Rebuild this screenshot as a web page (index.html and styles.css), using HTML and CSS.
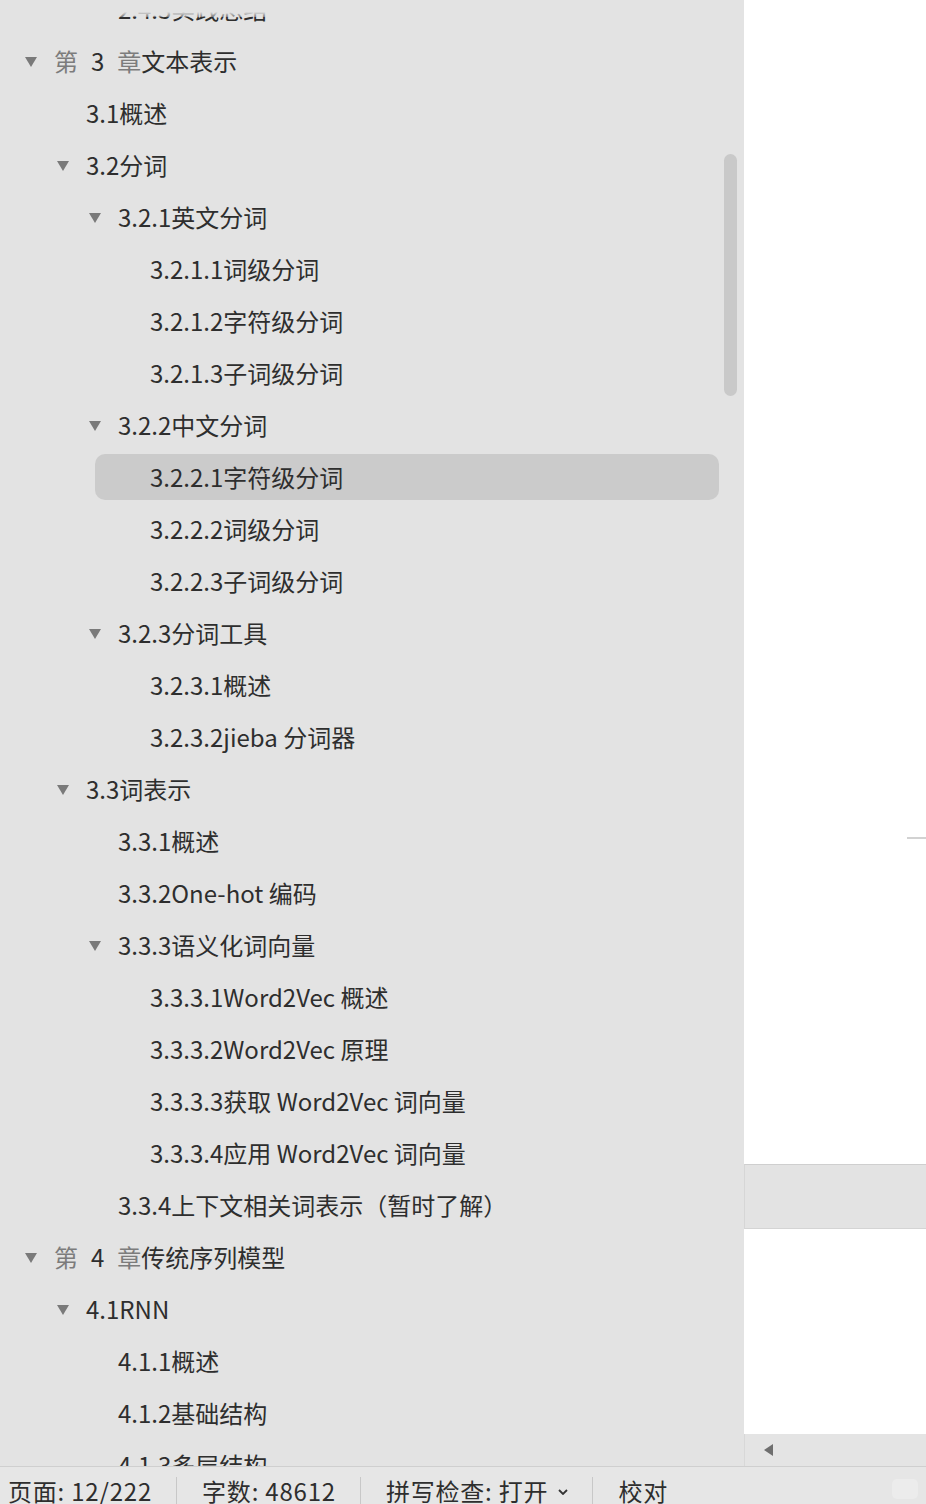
FILE: index.html
```html
<!DOCTYPE html>
<html lang="zh-CN">
<head>
<meta charset="utf-8">
<title>导航</title>
<link rel="stylesheet" href="styles.css">
</head>
<body>
<div class="app">
  <aside class="sidebar">
    <ul class="tree">
      <li class="row l2"><span class="item"><span class="tw"></span><span class="txt">2.4.3实践总结</span></span></li>
      <li class="row l0"><span class="item"><span class="tw"><i class="tri"></i></span><span class="txt"><span class="ch">第</span><span class="num">3</span><span class="ch">章</span>文本表示</span></span></li>
      <li class="row l1"><span class="item"><span class="tw"></span><span class="txt">3.1概述</span></span></li>
      <li class="row l1"><span class="item"><span class="tw"><i class="tri"></i></span><span class="txt">3.2分词</span></span></li>
      <li class="row l2"><span class="item"><span class="tw"><i class="tri"></i></span><span class="txt">3.2.1英文分词</span></span></li>
      <li class="row l3"><span class="item"><span class="tw"></span><span class="txt">3.2.1.1词级分词</span></span></li>
      <li class="row l3"><span class="item"><span class="tw"></span><span class="txt">3.2.1.2字符级分词</span></span></li>
      <li class="row l3"><span class="item"><span class="tw"></span><span class="txt">3.2.1.3子词级分词</span></span></li>
      <li class="row l2"><span class="item"><span class="tw"><i class="tri"></i></span><span class="txt">3.2.2中文分词</span></span></li>
      <li class="row l3 selected"><span class="item"><span class="tw"></span><span class="txt">3.2.2.1字符级分词</span></span></li>
      <li class="row l3"><span class="item"><span class="tw"></span><span class="txt">3.2.2.2词级分词</span></span></li>
      <li class="row l3"><span class="item"><span class="tw"></span><span class="txt">3.2.2.3子词级分词</span></span></li>
      <li class="row l2"><span class="item"><span class="tw"><i class="tri"></i></span><span class="txt">3.2.3分词工具</span></span></li>
      <li class="row l3"><span class="item"><span class="tw"></span><span class="txt">3.2.3.1概述</span></span></li>
      <li class="row l3"><span class="item"><span class="tw"></span><span class="txt">3.2.3.2jieba 分词器</span></span></li>
      <li class="row l1"><span class="item"><span class="tw"><i class="tri"></i></span><span class="txt">3.3词表示</span></span></li>
      <li class="row l2"><span class="item"><span class="tw"></span><span class="txt">3.3.1概述</span></span></li>
      <li class="row l2"><span class="item"><span class="tw"></span><span class="txt">3.3.2One-hot 编码</span></span></li>
      <li class="row l2"><span class="item"><span class="tw"><i class="tri"></i></span><span class="txt">3.3.3语义化词向量</span></span></li>
      <li class="row l3"><span class="item"><span class="tw"></span><span class="txt">3.3.3.1Word2Vec 概述</span></span></li>
      <li class="row l3"><span class="item"><span class="tw"></span><span class="txt">3.3.3.2Word2Vec 原理</span></span></li>
      <li class="row l3"><span class="item"><span class="tw"></span><span class="txt">3.3.3.3获取 Word2Vec 词向量</span></span></li>
      <li class="row l3"><span class="item"><span class="tw"></span><span class="txt">3.3.3.4应用 Word2Vec 词向量</span></span></li>
      <li class="row l2"><span class="item"><span class="tw"></span><span class="txt">3.3.4上下文相关词表示（暂时了解）</span></span></li>
      <li class="row l0"><span class="item"><span class="tw"><i class="tri"></i></span><span class="txt"><span class="ch">第</span><span class="num">4</span><span class="ch">章</span>传统序列模型</span></span></li>
      <li class="row l1"><span class="item"><span class="tw"><i class="tri"></i></span><span class="txt">4.1RNN</span></span></li>
      <li class="row l2"><span class="item"><span class="tw"></span><span class="txt">4.1.1概述</span></span></li>
      <li class="row l2"><span class="item"><span class="tw"></span><span class="txt">4.1.2基础结构</span></span></li>
      <li class="row l2"><span class="item"><span class="tw"></span><span class="txt">4.1.3多层结构</span></span></li>
    </ul>
    <div class="fade"></div>
    <div class="vscroll"></div>
  </aside>
  <main class="doc">
    <div class="gap-a"></div>
    <div class="mark"></div>
    <div class="gap-b"></div>
    <div class="band"></div>
    <div class="page"></div>
    <div class="hscroll"><i class="larrow"></i></div>
  </main>
  <footer class="status">
    <span class="st first">页面: 12/222</span>
    <span class="st">字数: 48612</span>
    <span class="st">拼写检查: 打开 <svg class="chev" viewBox="0 0 10 6" width="10" height="6"><path d="M1 1 L5 5 L9 1" fill="none" stroke="#333" stroke-width="1.8"/></svg></span>
    <span class="st last">校对</span>
    <span class="corner"></span>
  </footer>
</div>
</body>
</html>
```
FILE: styles.css
```css
* { box-sizing: border-box; }
html, body {
  margin: 0;
  padding: 0;
  width: 926px;
  height: 1504px;
  overflow: hidden;
  background: #ffffff;
  font-family: "Noto Sans CJK SC", "Noto Sans", sans-serif;
  color: #2e2e2e;
}
.app {
  display: grid;
  grid-template-columns: 744px 1fr;
  grid-template-rows: 1466px 38px;
  width: 926px;
  height: 1504px;
}
.sidebar {
  position: relative;
  background: #e3e3e3;
  overflow: hidden;
}
.tree {
  list-style: none;
  margin: -17px 0 0 0;
  padding: 0;
}
.row {
  display: flex;
  align-items: center;
  height: 52px;
}
.item {
  display: flex;
  align-items: center;
  flex: 1;
  height: 46px;
  margin-right: 25px;
  padding-left: 22px;
  border-radius: 10px;
  font-size: 24px;
  line-height: 1;
  white-space: nowrap;
}
.l0 .item { margin-left: 0; }
.l1 .item { margin-left: 32px; }
.l2 .item { margin-left: 64px; }
.l3 .item { margin-left: 95px; padding-left: 23px; }
.selected .item { background: #cbcbcb; }
.tw {
  display: flex;
  align-items: center;
  width: 32px;
  height: 100%;
  flex: none;
}
.tri {
  display: block;
  margin-left: 3px;
  margin-top: 1px;
  width: 0;
  height: 0;
  border-left: 6.5px solid transparent;
  border-right: 6.5px solid transparent;
  border-top: 10px solid #7a7a7a;
}
.txt { display: inline-flex; align-items: center; }
.ch { color: #7c7c7c; }
.num { margin: 0 13px 0 13px; }
.fade {
  position: absolute;
  left: 0;
  top: 0;
  width: 100%;
  height: 17px;
  background: linear-gradient(to bottom, #e3e3e3 0%, #e3e3e3 70%, rgba(227,227,227,0.4) 100%);
}
.vscroll {
  position: absolute;
  left: 724px;
  top: 154px;
  width: 13px;
  height: 242px;
  border-radius: 7px;
  background: #c9c9c9;
}
.doc {
  display: flex;
  flex-direction: column;
  background: #ffffff;
}
.gap-a { height: 837px; flex: none; }
.mark {
  align-self: flex-end;
  width: 19px;
  height: 2px;
  background: #d2d2d2;
  flex: none;
}
.gap-b { height: 325px; flex: none; }
.band {
  height: 65px;
  flex: none;
  background: #e3e3e3;
  border-top: 1px solid #cfcfcf;
  border-bottom: 1px solid #d4d4d4;
  border-left: 1px solid #d6d6d6;
}
.page { flex: 1; }
.hscroll {
  height: 32px;
  flex: none;
  background: #e4e4e4;
  display: flex;
  align-items: center;
  padding-left: 19px;
  border-left: 1px solid #d8d8d8;
}
.larrow {
  display: block;
  width: 0;
  height: 0;
  border-top: 6px solid transparent;
  border-bottom: 6px solid transparent;
  border-right: 9px solid #6e6e6e;
}
.status {
  grid-column: 1 / 3;
  display: flex;
  align-items: flex-start;
  background: #e6e6e6;
  border-top: 1px solid #cfcfcf;
}
.st {
  display: flex;
  align-items: center;
  height: 37px;
  padding: 10px 25px 0 25px;
  font-size: 24px;
  line-height: 1;
  letter-spacing: 0.8px;
  color: #2e2e2e;
  white-space: nowrap;
  position: relative;
}
.st.first { padding-left: 8px; }
.st:not(.last)::after {
  content: "";
  position: absolute;
  right: 0;
  top: 10px;
  bottom: 0;
  width: 1px;
  background: #c8c8c8;
}
.chev { margin-left: 10px; margin-top: 2px; }
.corner {
  margin-left: auto;
  margin-right: 8px;
  margin-top: 12px;
  width: 26px;
  height: 20px;
  border-radius: 5px;
  background: #ececec;
}
```
